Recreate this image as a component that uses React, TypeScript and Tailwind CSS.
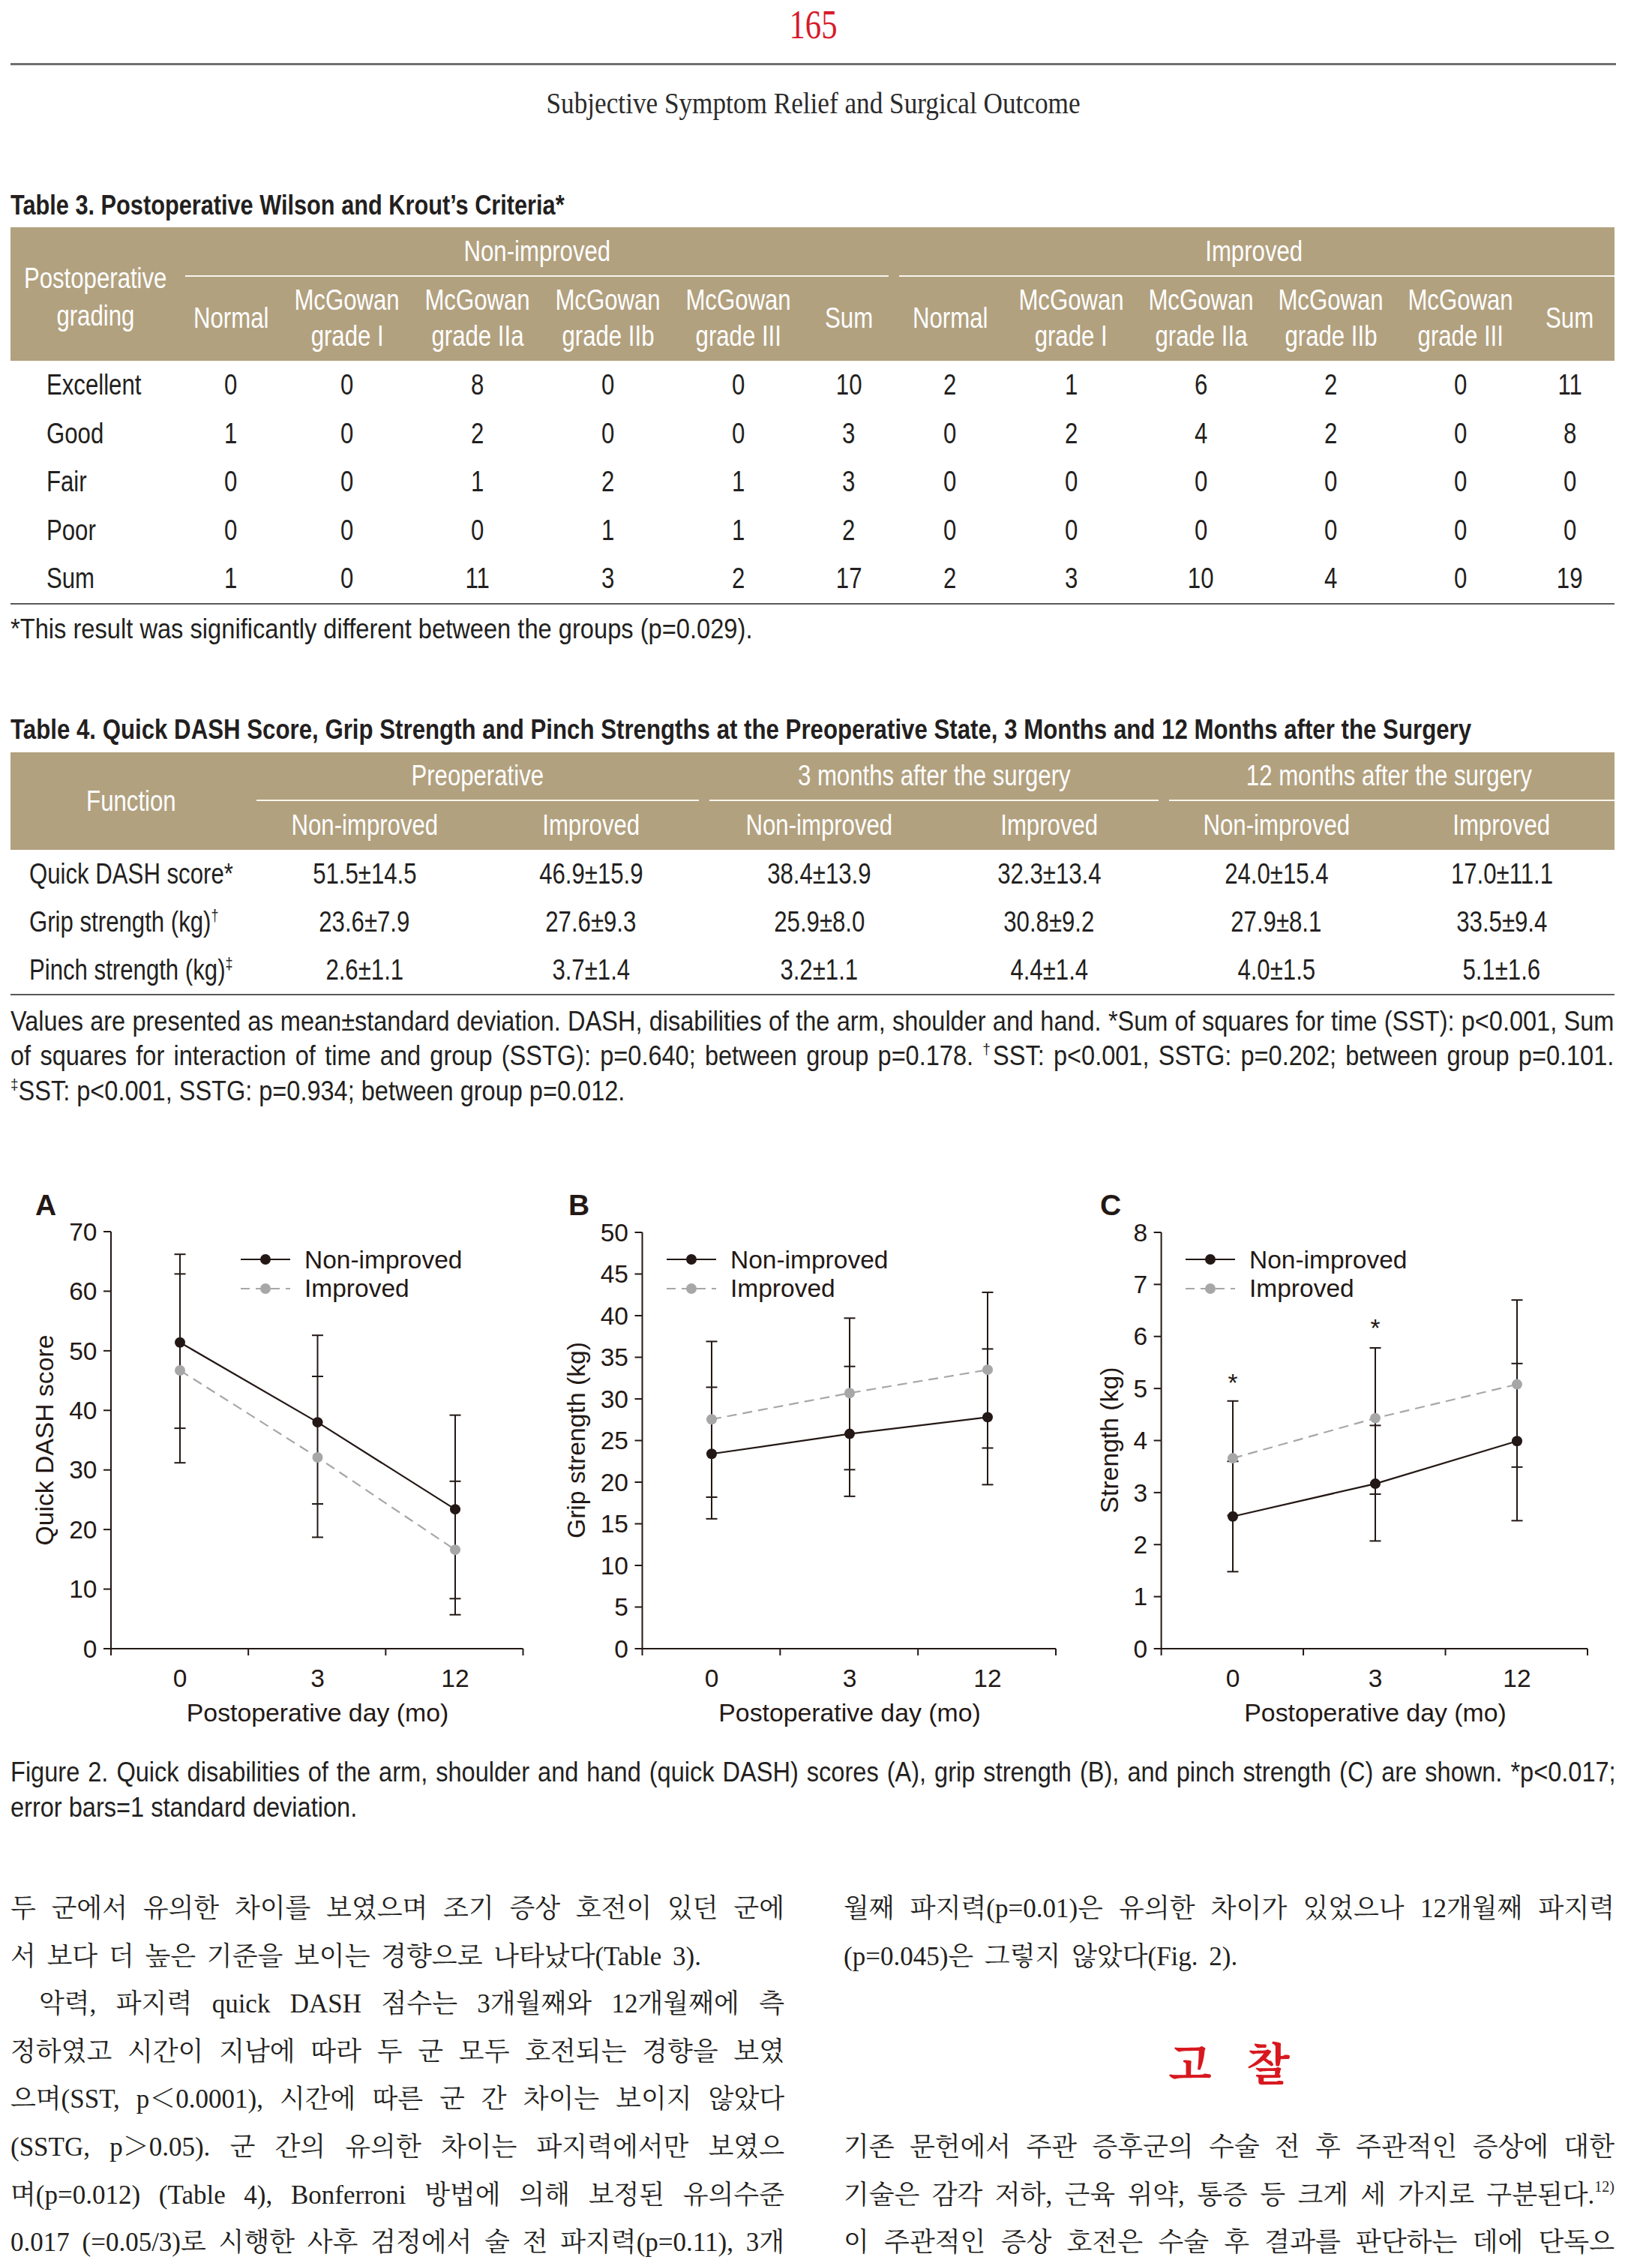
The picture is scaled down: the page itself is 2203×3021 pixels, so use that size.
import React from 'react';

// Liberation Sans squeezed horizontally stands in for the condensed Helvetica of the print
const sans = "font-['Liberation_Sans',Arial,sans-serif]";
const serifKo = "font-['Liberation_Serif','Noto_Serif_CJK_KR','Noto_Sans_CJK_KR',serif]";

const T3_GRID = 'grid grid-cols-[226px_136px_174px_174px_174px_174px_120px_150px_173px_173px_173px_173px_119px]';
const T4_GRID = 'grid grid-cols-[321px_302px_302px_307px_306px_300px_301px]';

const t3Sub: string[][] = [
  ['Normal'],
  ['McGowan', 'grade I'],
  ['McGowan', 'grade IIa'],
  ['McGowan', 'grade IIb'],
  ['McGowan', 'grade III'],
  ['Sum'],
];

const t3Rows: [string, string[]][] = [
  ['Excellent', ['0', '0', '8', '0', '0', '10', '2', '1', '6', '2', '0', '11']],
  ['Good', ['1', '0', '2', '0', '0', '3', '0', '2', '4', '2', '0', '8']],
  ['Fair', ['0', '0', '1', '2', '1', '3', '0', '0', '0', '0', '0', '0']],
  ['Poor', ['0', '0', '0', '1', '1', '2', '0', '0', '0', '0', '0', '0']],
  ['Sum', ['1', '0', '11', '3', '2', '17', '2', '3', '10', '4', '0', '19']],
];

const t4Rows: { label: string; mark: string; sup: boolean; vals: string[] }[] = [
  { label: 'Quick DASH score', mark: '*', sup: false, vals: ['51.5±14.5', '46.9±15.9', '38.4±13.9', '32.3±13.4', '24.0±15.4', '17.0±11.1'] },
  { label: 'Grip strength (kg)', mark: '†', sup: true, vals: ['23.6±7.9', '27.6±9.3', '25.9±8.0', '30.8±9.2', '27.9±8.1', '33.5±9.4'] },
  { label: 'Pinch strength (kg)', mark: '‡', sup: true, vals: ['2.6±1.1', '3.7±1.4', '3.2±1.1', '4.4±1.4', '4.0±1.5', '5.1±1.6'] },
];

// value, low end, high end of the error bar
type Pt = [number, number, number];

interface ChartSpec {
  x0: number;
  w: number;
  letter: string;
  letterX: number;
  axisX: number;
  xEnd: number;
  yTop: number;
  max: number;
  step: number;
  cats: number[];
  yLabel: string;
  yLabelX: number;
  legendX: number;
  non: Pt[];
  imp: Pt[];
  stars?: [number, number][];
}

const charts: ChartSpec[] = [
  {
    x0: 14, w: 720, letter: 'A', letterX: 47,
    axisX: 148, xEnd: 697.5, yTop: 1642, max: 70, step: 10,
    cats: [240, 423.5, 607],
    yLabel: 'Quick DASH score', yLabelX: 71,
    legendX: 321,
    non: [[51.4, 37.0, 66.2], [38.0, 24.3, 52.6], [23.4, 8.4, 39.2]],
    imp: [[46.7, 31.2, 62.9], [32.1, 18.7, 45.7], [16.6, 5.7, 28.1]],
  },
  {
    x0: 734, w: 720, letter: 'B', letterX: 758,
    axisX: 856.5, xEnd: 1408, yTop: 1643, max: 50, step: 5,
    cats: [949, 1133, 1317],
    yLabel: 'Grip strength (kg)', yLabelX: 780,
    legendX: 889,
    non: [[23.4, 15.6, 31.4], [25.8, 18.3, 33.9], [27.8, 19.7, 36.0]],
    imp: [[27.55, 18.2, 36.9], [30.7, 21.5, 39.7], [33.5, 24.1, 42.8]],
  },
  {
    x0: 1454, w: 701, letter: 'C', letterX: 1467,
    axisX: 1548.6, xEnd: 2117, yTop: 1643, max: 8, step: 1,
    cats: [1644, 1834, 2023],
    yLabel: 'Strength (kg)', yLabelX: 1491,
    legendX: 1581,
    non: [[2.54, 1.48, 3.6], [3.17, 2.07, 4.29], [3.99, 2.46, 5.48]],
    imp: [[3.66, 2.56, 4.76], [4.43, 2.97, 5.78], [5.08, 3.49, 6.7]],
    stars: [[1644, 1855], [1834, 1782]],
  },
];

const Chart: React.FC<{ s: ChartSpec }> = ({ s }) => {
  const Y0 = 2198;
  const ink = '#231815';
  const grey = '#a7a7a7';
  const y = (v: number) => Y0 - (v * (Y0 - s.yTop)) / s.max;
  const ticksY: number[] = [];
  for (let v = 0; v <= s.max + 1e-6; v += s.step) ticksY.push(v);
  const ticksX = [0, 1, 2, 3].map((k) => s.axisX + (k * (s.xEnd - s.axisX)) / 3);
  const path = (pts: Pt[]) => pts.map((p, i) => `${s.cats[i]},${y(p[0])}`).join(' ');
  const lx = s.legendX;

  return (
    <svg
      width={s.w}
      height={760}
      viewBox={`${s.x0} 1560 ${s.w} 760`}
      fontFamily="'Liberation Sans', Arial, sans-serif"
      fill={ink}
      className="shrink-0"
    >
      <text x={s.letterX} y={1620} fontSize={39} fontWeight={700}>{s.letter}</text>

      {/* axes */}
      <line x1={s.axisX} y1={s.yTop} x2={s.axisX} y2={Y0 + 1} stroke={ink} strokeWidth={2} />
      <line x1={s.axisX - 1} y1={Y0} x2={s.xEnd} y2={Y0} stroke={ink} strokeWidth={2} />
      {ticksY.map((v) => (
        <g key={v}>
          <line x1={s.axisX - 10} y1={y(v)} x2={s.axisX} y2={y(v)} stroke={ink} strokeWidth={2} />
          <text x={s.axisX - 18.5} y={y(v) + 11.7} fontSize={33.5} textAnchor="end">{v}</text>
        </g>
      ))}
      {ticksX.map((x, i) => (
        <line key={i} x1={x} y1={Y0} x2={x} y2={Y0 + 9} stroke={ink} strokeWidth={2} />
      ))}
      {['0', '3', '12'].map((t, i) => (
        <text key={t} x={s.cats[i]} y={2249} fontSize={33.5} textAnchor="middle">{t}</text>
      ))}
      <text x={s.cats[1]} y={2295} fontSize={33.8} textAnchor="middle">Postoperative day (mo)</text>
      <text
        x={s.yLabelX}
        y={1920}
        fontSize={33.7}
        textAnchor="middle"
        transform={`rotate(-90 ${s.yLabelX} 1920)`}
      >
        {s.yLabel}
      </text>

      {/* legend */}
      <line x1={lx} y1={1679} x2={lx + 66} y2={1679} stroke={ink} strokeWidth={2.2} />
      <circle cx={lx + 33} cy={1679} r={7} fill={ink} />
      <text x={lx + 85} y={1690.5} fontSize={33.5}>Non-improved</text>
      <line x1={lx} y1={1718} x2={lx + 66} y2={1718} stroke={grey} strokeWidth={2.2} strokeDasharray="12 8" />
      <circle cx={lx + 33} cy={1718} r={7} fill={grey} />
      <text x={lx + 85} y={1729} fontSize={33.5}>Improved</text>

      {/* error bars */}
      {s.cats.map((cx, i) => {
        const a = s.non[i];
        const b = s.imp[i];
        const lo = Math.min(a[1], b[1]);
        const hi = Math.max(a[2], b[2]);
        return (
          <g key={cx} stroke={ink} strokeWidth={2}>
            <line x1={cx} y1={y(hi)} x2={cx} y2={y(lo)} />
            {[a[1], a[2], b[1], b[2]].map((v, k) => (
              <line key={k} x1={cx - 7.5} y1={y(v)} x2={cx + 7.5} y2={y(v)} />
            ))}
          </g>
        );
      })}

      <polyline points={path(s.imp)} fill="none" stroke={grey} strokeWidth={2.2} strokeDasharray="13 8" />
      <polyline points={path(s.non)} fill="none" stroke={ink} strokeWidth={2.2} />
      {s.imp.map((p, i) => (
        <circle key={`i${i}`} cx={s.cats[i]} cy={y(p[0])} r={7} fill={grey} />
      ))}
      {s.non.map((p, i) => (
        <circle key={`n${i}`} cx={s.cats[i]} cy={y(p[0])} r={7} fill={ink} />
      ))}
      {s.stars?.map(([x, yy]) => (
        <text key={x} x={x} y={yy} fontSize={33.5} textAnchor="middle">*</text>
      ))}
    </svg>
  );
};

// condensed text run inside a table cell
const Cn: React.FC<{ children: React.ReactNode; left?: boolean }> = ({ children, left }) => (
  <span className={`inline-block whitespace-nowrap scale-x-[0.82] ${left ? 'origin-left' : ''}`}>{children}</span>
);

const Line: React.FC<{ children: React.ReactNode; last?: boolean; className?: string }> = ({ children, last, className = '' }) => (
  <div
    className={`h-[63.6px] leading-[63.6px] whitespace-nowrap [word-spacing:6px] ${last ? 'text-left' : 'text-justify [text-align-last:justify]'} ${className}`}
  >
    {children}
  </div>
);

export default function App() {
  return (
    <div className="w-[2203px] h-[3021px] overflow-hidden bg-white pl-[14px] pr-[48px] text-[#231f20]">
      {/* running head */}
      <div className="flex justify-center pt-[6px]">
        <span className="scale-x-[0.79] font-['Liberation_Serif',serif] text-[54px] leading-[54px] text-[#d71a2a]">165</span>
      </div>
      <div className="mt-[24px] h-[3px] bg-[#6f6f70]" />
      <div className="mt-[31px] flex justify-center">
        <span className="scale-x-[0.88] font-['Liberation_Serif',serif] text-[40px] leading-[40px] whitespace-nowrap text-[#2b2b2b]">
          Subjective Symptom Relief and Surgical Outcome
        </span>
      </div>

      {/* Table 3 */}
      <div className={`${sans} mt-[97px] w-max origin-left scale-x-[0.83] text-[37px] leading-[37px] font-bold whitespace-nowrap`}>
        Table 3. Postoperative Wilson and Krout’s Criteria*
      </div>
      <div className={`${sans} mt-[11px] w-[2139px] text-[38px]`}>
        <div className={`${T3_GRID} grid-rows-[66px_112px] bg-[#b2a17f] text-white`}>
          <div className="row-span-2 flex flex-col items-center justify-center pt-[7px] leading-[50px]">
            <Cn>Postoperative</Cn>
            <Cn>grading</Cn>
          </div>
          <div className="col-span-6 flex flex-col">
            <div className="flex flex-1 items-center justify-center leading-none"><Cn>Non-improved</Cn></div>
            <div className="mx-[7px] h-[2px] bg-[#f8f5ee]" />
          </div>
          <div className="col-span-6 flex flex-col">
            <div className="flex flex-1 items-center justify-center leading-none"><Cn>Improved</Cn></div>
            <div className="ml-[7px] h-[2px] bg-[#f8f5ee]" />
          </div>
          {[...t3Sub, ...t3Sub].map((lines, i) => (
            <div key={i} className="flex flex-col items-center justify-center pb-[2px] text-center leading-[48px]">
              {lines.map((l) => (
                <Cn key={l}>{l}</Cn>
              ))}
            </div>
          ))}
        </div>
        <div className="border-b-2 border-[#58595b]">
          {t3Rows.map(([label, vals]) => (
            <div key={label} className={`${T3_GRID} h-[64.5px] items-center leading-none`}>
              <div className="pl-[48px]"><Cn left>{label}</Cn></div>
              {vals.map((v, i) => (
                <div key={i} className="text-center"><Cn>{v}</Cn></div>
              ))}
            </div>
          ))}
        </div>
      </div>
      <div className={`${sans} mt-[9px] w-max origin-left scale-x-[0.907] text-[36px] leading-[48px] whitespace-nowrap`}>
        *This result was significantly different between the groups (p=0.029).
      </div>

      {/* Table 4 */}
      <div className={`${sans} mt-[91px] w-max origin-left scale-x-[0.844] text-[37px] leading-[37px] font-bold whitespace-nowrap`}>
        Table 4. Quick DASH Score, Grip Strength and Pinch Strengths at the Preoperative State, 3 Months and 12 Months after the Surgery
      </div>
      <div className={`${sans} mt-[12px] w-[2139px] text-[38px]`}>
        <div className={`${T4_GRID} grid-rows-[65px_65px] bg-[#b2a17f] text-white`}>
          <div className="row-span-2 flex items-center justify-center leading-none"><Cn>Function</Cn></div>
          {['Preoperative', '3 months after the surgery', '12 months after the surgery'].map((g, i) => (
            <div key={g} className="col-span-2 flex flex-col">
              <div className="flex flex-1 items-center justify-center leading-none"><Cn>{g}</Cn></div>
              <div className={`${i === 2 ? 'ml-[7px]' : 'mx-[7px]'} h-[2px] bg-[#f8f5ee]`} />
            </div>
          ))}
          {['Non-improved', 'Improved', 'Non-improved', 'Improved', 'Non-improved', 'Improved'].map((h, i) => (
            <div key={i} className="flex items-center justify-center leading-none"><Cn>{h}</Cn></div>
          ))}
        </div>
        <div className="border-b-2 border-[#58595b]">
          {t4Rows.map((r) => (
            <div key={r.label} className={`${T4_GRID} h-[64px] items-center leading-none`}>
              <div className="pl-[25px]">
                <Cn left>
                  {r.label}
                  {r.sup ? <sup className="text-[22px] -top-[14px]">{r.mark}</sup> : r.mark}
                </Cn>
              </div>
              {r.vals.map((v, i) => (
                <div key={i} className="text-center"><Cn>{v}</Cn></div>
              ))}
            </div>
          ))}
        </div>
      </div>
      <div className={`${sans} mt-[12px] w-[2368px] origin-left scale-x-[0.903] text-[36px] leading-[46.5px] whitespace-nowrap`}>
        <div className="text-justify [text-align-last:justify]">
          Values are presented as mean±standard deviation. DASH, disabilities of the arm, shoulder and hand. *Sum of squares for time (SST): p&lt;0.001, Sum
        </div>
        <div className="text-justify [text-align-last:justify]">
          of squares for interaction of time and group (SSTG): p=0.640; between group p=0.178. <sup className="text-[21px] -top-[14px]">†</sup>SST: p&lt;0.001, SSTG: p=0.202; between group p=0.101.
        </div>
        <div>
          <sup className="text-[21px] -top-[14px]">‡</sup>SST: p&lt;0.001, SSTG: p=0.934; between group p=0.012.
        </div>
      </div>

      {/* Figure 2 */}
      <div className="mt-[82px] flex h-[760px]">
        {charts.map((c) => (
          <Chart key={c.letter} s={c} />
        ))}
      </div>
      <div className={`${sans} mt-[19px] w-[2368px] origin-left scale-x-[0.904] text-[36px] leading-[47px] whitespace-nowrap`}>
        <div className="text-justify [text-align-last:justify]">
          Figure 2. Quick disabilities of the arm, shoulder and hand (quick DASH) scores (A), grip strength (B), and pinch strength (C) are shown. *p&lt;0.017;
        </div>
        <div>error bars=1 standard deviation.</div>
      </div>

      {/* body text */}
      <div className={`${serifKo} mt-[80px] grid grid-cols-[1032px_1028px] gap-x-[79px] text-[35px]`}>
        <div>
          <Line>두 군에서 유의한 차이를 보였으며 조기 증상 호전이 있던 군에</Line>
          <Line last>서 보다 더 높은 기준을 보이는 경향으로 나타났다(Table 3).</Line>
          <Line className="pl-[38px]">악력, 파지력 quick DASH 점수는 3개월째와 12개월째에 측</Line>
          <Line>정하였고 시간이 지남에 따라 두 군 모두 호전되는 경향을 보였</Line>
          <Line>으며(SST, p＜0.0001), 시간에 따른 군 간 차이는 보이지 않았다</Line>
          <Line>(SSTG, p＞0.05). 군 간의 유의한 차이는 파지력에서만 보였으</Line>
          <Line>며(p=0.012) (Table 4), Bonferroni 방법에 의해 보정된 유의수준</Line>
          <Line>0.017 (=0.05/3)로 시행한 사후 검정에서 술 전 파지력(p=0.11), 3개</Line>
        </div>
        <div>
          <Line>월째 파지력(p=0.01)은 유의한 차이가 있었으나 12개월째 파지력</Line>
          <Line last>(p=0.045)은 그렇지 않았다(Fig. 2).</Line>
          <div className="flex h-[190.8px] items-center justify-center gap-[46px] pt-[25px] font-['Noto_Serif_CJK_KR','Noto_Sans_CJK_KR',sans-serif] text-[60px] leading-none font-bold text-[#d7191f]">
            <span>고</span>
            <span>찰</span>
          </div>
          <Line>기존 문헌에서 주관 증후군의 수술 전 후 주관적인 증상에 대한</Line>
          <Line>
            기술은 감각 저하, 근육 위약, 통증 등 크게 세 가지로 구분된다.<sup className="text-[20px] -top-[16px]">12)</sup>
          </Line>
          <Line>이 주관적인 증상 호전은 수술 후 결과를 판단하는 데에 단독으</Line>
        </div>
      </div>
    </div>
  );
}
